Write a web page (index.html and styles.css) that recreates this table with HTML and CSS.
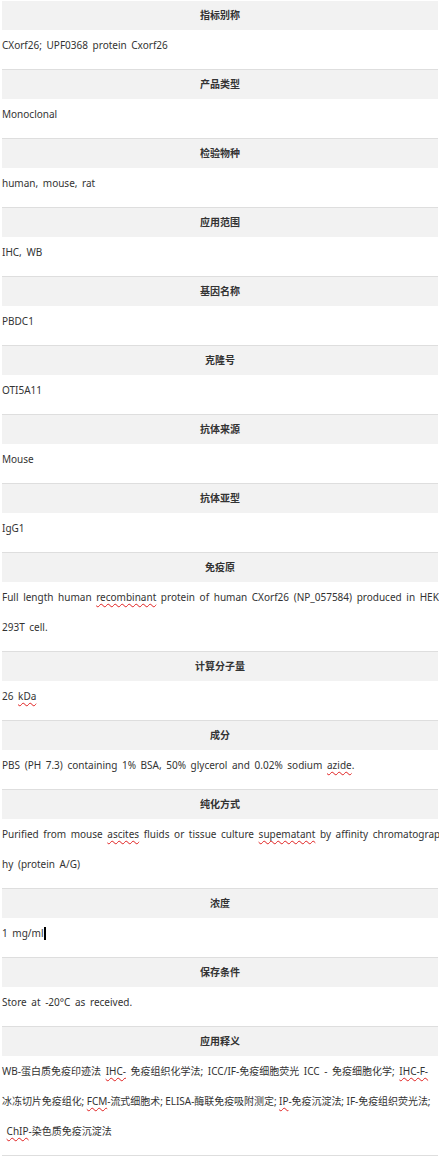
FILE: index.html
```html
<!DOCTYPE html>
<html lang="zh-CN">
<head>
<meta charset="utf-8">
<title>产品信息</title>
<link rel="stylesheet" href="styles.css">
</head>
<body>
<div class="spec">
  <div class="sec"><div class="hd">指标别称</div><div class="val">CXorf26; UPF0368 protein Cxorf26</div></div>
  <div class="sec"><div class="hd">产品类型</div><div class="val">Monoclonal</div></div>
  <div class="sec"><div class="hd">检验物种</div><div class="val">human, mouse, rat</div></div>
  <div class="sec"><div class="hd">应用范围</div><div class="val">IHC, WB</div></div>
  <div class="sec"><div class="hd">基因名称</div><div class="val">PBDC1</div></div>
  <div class="sec"><div class="hd">克隆号</div><div class="val">OTI5A11</div></div>
  <div class="sec"><div class="hd">抗体来源</div><div class="val">Mouse</div></div>
  <div class="sec"><div class="hd">抗体亚型</div><div class="val">IgG1</div></div>
  <div class="sec"><div class="hd">免疫原</div><div class="val">Full length human <span class="sp">recombinant</span> protein of human CXorf26 (NP_057584) produced in HEK<br>293T cell.</div></div>
  <div class="sec"><div class="hd">计算分子量</div><div class="val">26 <span class="sp">kDa</span></div></div>
  <div class="sec"><div class="hd">成分</div><div class="val">PBS (PH 7.3) containing 1% BSA, 50% glycerol and 0.02% sodium <span class="sp">azide</span>.</div></div>
  <div class="sec"><div class="hd">纯化方式</div><div class="val">Purified from mouse <span class="sp">ascites</span> fluids or tissue culture <span class="sp">supematant</span> by affinity chromatograp<br>hy (protein A/G)</div></div>
  <div class="sec"><div class="hd">浓度</div><div class="val">1 mg/ml<span class="caret"></span></div></div>
  <div class="sec"><div class="hd">保存条件</div><div class="val">Store at -20°C as received.</div></div>
  <div class="sec"><div class="hd">应用释义</div><div class="val">WB-蛋白质免疫印迹法 <span class="sp">IHC-</span> 免疫组织化学法; ICC/IF-免疫细胞荧光 ICC - 免疫细胞化学; <span class="sp">IHC-F-</span><br><span class="tight">冰冻切片免疫组化; <span class="sp">FCM</span>-流式细胞术; ELISA-酶联免疫吸附测定; <span class="sp">IP</span>-免疫沉淀法; IF-免疫组织荧光法;</span><br>&nbsp;<span class="sp">ChIP</span>-染色质免疫沉淀法</div></div>
</div>
</body>
</html>
```

FILE: styles.css
```css
html, body {
  margin: 0;
  padding: 0;
  background: #fff;
  overflow: hidden;
}
body {
  font-family: "Noto Sans", "Noto Sans CJK SC", sans-serif;
  font-size: 10px;
  color: #333;
}
.spec {
  padding: 1px 0 0 2px;
  width: 436px;
}
.hd {
  height: 29px;
  line-height: 29px;
  background: #f2f2f2;
  text-align: center;
  font-weight: 700;
  color: #333;
}
.val {
  line-height: 30px;
  padding-bottom: 9px;
  border-bottom: 1px solid #dedede;
  white-space: nowrap;
  word-spacing: 2px;
}
.tight {
  word-spacing: 0;
  letter-spacing: -0.05px;
}
.sp {
  text-decoration: underline wavy #e02020;
  text-decoration-thickness: 1px;
  text-underline-offset: 2px;
}
.caret {
  display: inline-block;
  width: 2px;
  height: 13px;
  background: #000;
  vertical-align: -3px;
  margin-left: 1px;
}
```
